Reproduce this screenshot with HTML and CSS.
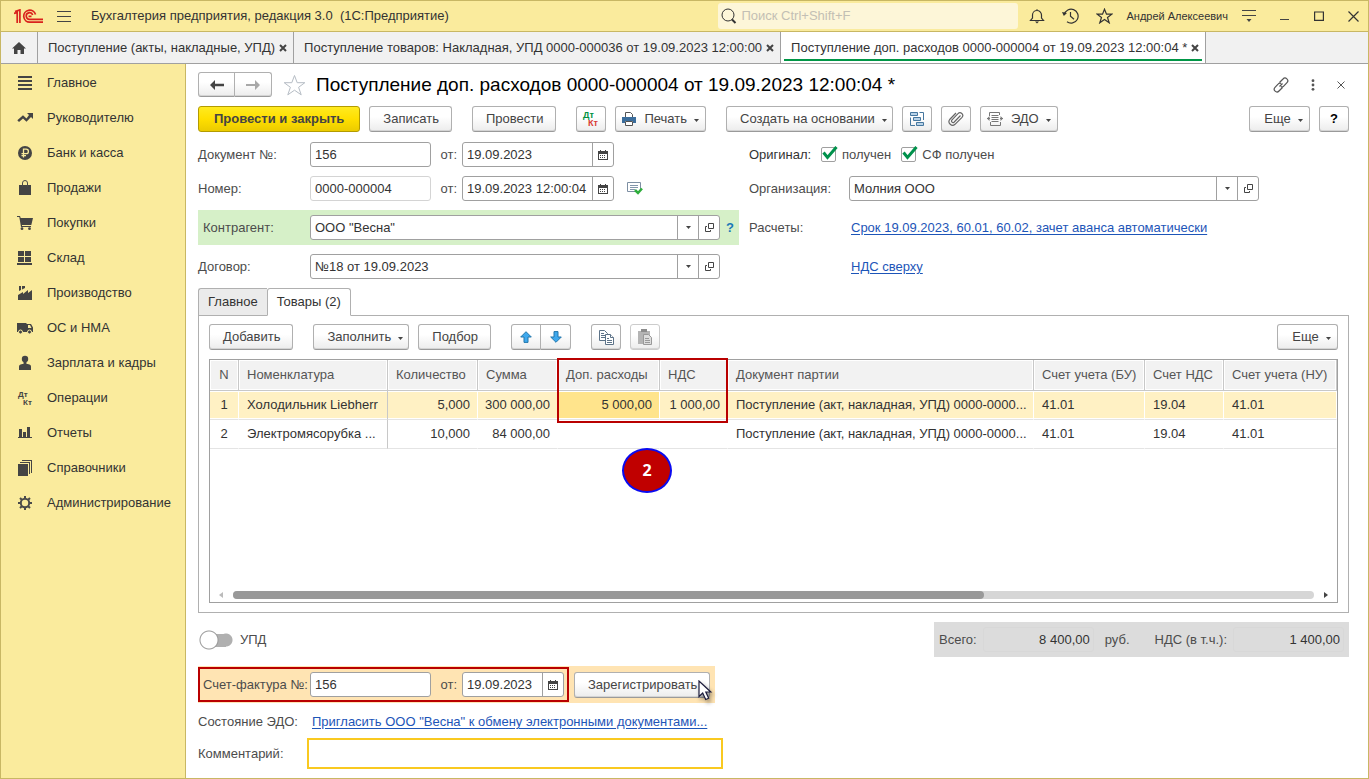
FILE: index.html
```
<!DOCTYPE html>
<html lang="ru">
<head>
<meta charset="utf-8">
<title>Бухгалтерия предприятия, редакция 3.0</title>
<link rel="stylesheet" href="styles.css">
</head>
<body>
<svg class="defs" aria-hidden="true">
  <symbol id="calendar" viewBox="0 0 10 10"><path d="M0 1h10v9H0z M1 4v5h8V4z" fill-rule="evenodd"/><path d="M2 0h1v2H2zM7 0h1v2H7zM2 5h1v1H2zM4 5h1v1H4zM6 5h1v1H6zM2 7h1v1H2zM4 7h1v1H4zM6 7h1v1H6z"/></symbol>
  <symbol id="caret" viewBox="0 0 5 3"><path d="M0 0h5L2.500 3z"/></symbol>
  <symbol id="open" viewBox="0 0 9 9"><path d="M3.500.5h5v5h-5zM2 3.500H.5v5h5V7" fill="none" stroke="#444"/></symbol>
  <symbol id="cross" viewBox="0 0 8 8"><path d="M1 1l6 6M7 1L1 7" fill="none" stroke="#444" stroke-width="2"/></symbol>
</svg>
<div class="window">
  <header class="titlebar">
    <svg class="logo" width="29" height="15" viewBox="0 0 29 15" fill="none" stroke="#d9221c" stroke-width="1.700"><path d="M0 4.500L3.200 3.500V14M1 2.500L5.900.9V14M21.500 5.500A6 6 0 1 0 16 13.200H29M18.700 6A3.300 3.300 0 1 0 16 10.300H29M14.500 7.300h3"/></svg>
    <button class="bare menu" aria-label="Меню"><svg width="14" height="11" viewBox="0 0 14 11"><path d="M0 0h14v1H0zM0 5h14v1H0zM0 10h14v1H0z"/></svg></button>
    <div class="app-name">Бухгалтерия предприятия, редакция 3.0&nbsp; (1С:Предприятие)</div>
    <label class="search"><svg width="16" height="17" viewBox="0 0 16 17" fill="none" stroke="#333"><circle cx="7" cy="7" r="6"/><path d="M11 11.500l3.500 3.500" stroke-width="2"/></svg><input type="text" placeholder="Поиск Ctrl+Shift+F" aria-label="Поиск"></label>
    <div class="win-tools">
      <button class="bare" aria-label="Уведомления"><svg width="16" height="16" viewBox="0 0 16 16" fill="none" stroke="#333"><path d="M8 1.200v1.300M1.500 12.500h13L12.500 10V7a4.500 4.500 0 0 0-9 0v3z" stroke-width="1.200"/><path d="M6 13.500h4L8 15.600z" fill="#333" stroke="none"/></svg></button>
      <button class="bare" aria-label="История"><svg width="17" height="16" viewBox="0 0 17 16" fill="none" stroke="#333"><path d="M2.300 6.500A7 7 0 1 1 5 13.800M8.500 4v4.300l3.500 3" stroke-width="1.200"/><path d="M0 4l1.800 4L5 5z" fill="#333" stroke="none"/></svg></button>
      <button class="bare" aria-label="Избранное"><svg width="17" height="16" viewBox="0 0 17 16" fill="none" stroke="#333" stroke-width="1.200"><path d="M8.500 1.200l2 5h5.300l-4.300 3.300 1.700 5.300-4.700-3.200-4.700 3.200 1.700-5.300L1.200 6.200h5.300z"/></svg></button>
      <span class="user">Андрей Алексеевич</span>
      <button class="bare" aria-label="Настройки"><svg width="14" height="12" viewBox="0 0 14 12"><path d="M0 0h14v1H0zM0 5h14v1H0zM4.500 9h5L7 12z"/></svg></button>
      <button class="bare" aria-label="Свернуть"><svg width="10" height="10" viewBox="0 0 10 10"><path d="M0 8h9v1H0z"/></svg></button>
      <button class="bare" aria-label="Развернуть"><svg width="10" height="10" viewBox="0 0 10 10" fill="none" stroke="#333" stroke-width="1.200"><path d="M.6 1h8.800v8.400H.6z"/></svg></button>
      <button class="bare" aria-label="Закрыть"><svg width="11" height="11" viewBox="0 0 11 11" fill="none" stroke="#333" stroke-width="1.200"><path d="M.5.5l10 10M10.500.5l-10 10"/></svg></button>
    </div>
  </header>

  <nav class="tabbar" aria-label="Открытые окна">
    <button class="win-tab home" aria-label="Начальная страница"><svg width="14" height="12" viewBox="0 0 14 12"><path d="M7 0l7 6.500h-2V12H8.500V8h-3v4H2V6.500H0z"/></svg></button>
    <button class="win-tab">Поступление (акты, накладные, УПД)<svg width="8" height="8"><use href="#cross"/></svg></button>
    <button class="win-tab">Поступление товаров: Накладная, УПД 0000-000036 от 19.09.2023 12:00:00<svg width="8" height="8"><use href="#cross"/></svg></button>
    <button class="win-tab current">Поступление доп. расходов 0000-000004 от 19.09.2023 12:00:04 *<svg width="8" height="8"><use href="#cross"/></svg></button>
  </nav>

  <div class="workspace">
    <nav class="sidebar" aria-label="Разделы">
      <a href="#"><svg width="16" height="16" viewBox="0 0 16 16"><path d="M1 1h14v2H1zM1 5h14v2H1zM1 9h14v2H1zM1 13h14v2H1z"/></svg>Главное</a>
      <a href="#"><svg width="16" height="16" viewBox="0 0 16 16"><path d="M10 3h6v6l-2-2-4.500 4.800L6 8.500 2 12 .3 10.300 6 5.200l3.500 3.300L12 5z"/></svg>Руководителю</a>
      <a href="#"><svg width="16" height="16" viewBox="0 0 16 16"><circle cx="8" cy="8" r="7"/><path d="M6.500 12.500V4.200h2.700a2.200 2.200 0 0 1 0 4.400H4.500M4.500 10.600h4.500" fill="none" stroke="#faeb9d" stroke-width="1.300"/></svg>Банк и касса</a>
      <a href="#"><svg width="16" height="16" viewBox="0 0 16 16"><path d="M2 5h3v2h1V5h4v2h1V5h3v10H2z"/><path d="M5.500 7V3a2.500 2.500 0 0 1 5 0v4" fill="none" stroke="#4a4a4a"/></svg>Продажи</a>
      <a href="#"><svg width="16" height="16" viewBox="0 0 16 16"><path d="M0 1h3l.7 2H16l-1.700 7H5v1h9v1H4L2.300 2H0z"/><circle cx="5" cy="13.700" r="1.400"/><circle cx="12.500" cy="13.700" r="1.400"/></svg>Покупки</a>
      <a href="#"><svg width="16" height="16" viewBox="0 0 16 16"><path d="M1 1h6v5H1zM8 1h6v5H8zM1 7h6v5H1zM8 7h6v5H8zM0 13h15v2H0z"/></svg>Склад</a>
      <a href="#"><svg width="16" height="16" viewBox="0 0 16 16"><path d="M1 15v-5l5-3v2l5-4v3l4-3v10zM2 1h2v4L2 6zM5 1h3v2L5 4.500z"/></svg>Производство</a>
      <a href="#"><svg width="16" height="16" viewBox="0 0 16 16"><path fill-rule="evenodd" d="M0 3h9.500v1H14l2 3.500V12H0zM11 5v3h3.500L13 5z"/><g stroke="#faeb9d"><circle cx="3.500" cy="12" r="2"/><circle cx="12.500" cy="12" r="2"/></g></svg>ОС и НМА</a>
      <a href="#"><svg width="16" height="16" viewBox="0 0 16 16"><circle cx="8" cy="4" r="3.200"/><path d="M6.500 6h3v3h-3zM2 15v-3.500C2 9.500 4 9 8 9s6 .5 6 2.500V15z"/></svg>Зарплата и кадры</a>
      <a href="#"><svg class="dtkt" width="16" height="16" viewBox="0 0 16 16"><text x="1" y="7">Дт</text><text x="6" y="15">Кт</text></svg>Операции</a>
      <a href="#"><svg width="16" height="16" viewBox="0 0 16 16"><path d="M2 4h3v8H2zM6 7h3v5H6zM10 2h3v10h-3zM1 12h14v1H1z"/></svg>Отчеты</a>
      <a href="#"><svg width="16" height="16" viewBox="0 0 16 16"><path d="M1 4h10v12H1zM3 2h10v12h-1V3H3zM5 0h10v13h-1V1H5z"/></svg>Справочники</a>
      <a href="#"><svg width="16" height="16" viewBox="0 0 16 16" fill="none" stroke="#4a4a4a"><circle cx="8" cy="8" r="4.200" stroke-width="2"/><path d="M8 1v2.500M8 12.500V15M1 8h2.500M12.500 8H15M3 3l1.800 1.800M11.200 11.200L13 13M3 13l1.800-1.800M11.200 4.800L13 3" stroke-width="2"/></svg>Администрирование</a>
    </nav>

    <main class="form">
      <div class="form-head">
        <div class="btn-pair">
          <button class="btn" aria-label="Назад"><svg width="14" height="10" viewBox="0 0 14 10"><path d="M0 5l5-5v3.800h9v2.400H5V10z"/></svg></button>
          <button class="btn forward" aria-label="Вперед"><svg width="14" height="10" viewBox="0 0 14 10"><path d="M14 5L9 0v4H0v2h9v4z"/></svg></button>
        </div>
        <button class="bare fav" aria-label="В избранное"><svg width="23" height="22" viewBox="0 0 23 22" fill="#fff" stroke="#b5bcc4"><path d="M11.500 1.500l2.700 7.200h7.600l-6.200 4.600 2.600 7.500-6.700-4.600-6.700 4.600 2.600-7.500L1.200 8.700h7.600z"/></svg></button>
        <h1>Поступление доп. расходов 0000-000004 от 19.09.2023 12:00:04 *</h1>
        <div class="head-tools">
          <button class="bare" aria-label="Ссылка"><svg width="16" height="16" viewBox="0 0 16 16" fill="none" stroke="#555" stroke-width="1.200"><path d="M6.500 5.500L10 2a2.600 2.600 0 0 1 4 3.700L10.700 9.200a2 2 0 0 1-2.700.3M9.500 10.500L6 14a2.600 2.600 0 0 1-4-3.700L5.300 6.800A2 2 0 0 1 8 6.500M6.500 9.500l3-3"/></svg></button>
          <button class="bare" aria-label="Еще"><svg width="4" height="12" viewBox="0 0 4 12" fill="#555"><circle cx="2" cy="1.700" r="1.400"/><circle cx="2" cy="6" r="1.400"/><circle cx="2" cy="10.300" r="1.400"/></svg></button>
          <button class="bare" aria-label="Закрыть форму"><svg width="8" height="8" viewBox="0 0 8 8" fill="none" stroke="#555"><path d="M.5.5l7 7M7.500.5l-7 7"/></svg></button>
        </div>
      </div>

      <div class="commands">
        <button class="btn primary">Провести и закрыть</button>
        <button class="btn">Записать</button>
        <button class="btn spaced">Провести</button>
        <button class="btn icon spaced" aria-label="Проводки"><svg class="dtkt color" width="18" height="16" viewBox="0 0 18 16"><text x="1" y="7">Дт</text><text x="6" y="15">Кт</text></svg></button>
        <button class="btn tight"><svg width="14" height="14" viewBox="0 0 14 14"><path d="M3.500 5V.5h5l2 2V5" fill="#fff" stroke="#555"/><path d="M0 5h14v6h-3V9H3v2H0z" fill="#3c6e9c"/><path d="M3.500 9.500h7v4h-7z" fill="#fff" stroke="#555"/></svg>Печать<svg class="car" width="5" height="3"><use href="#caret"/></svg></button>
        <button class="btn drop spaced">Создать на основании<svg class="car" width="5" height="3"><use href="#caret"/></svg></button>
        <button class="btn icon" aria-label="Связанные документы"><svg width="14" height="14" viewBox="0 0 14 14" fill="#b9d3e8" stroke="#46779f"><path d="M.5.500h7v3h-7zM3.500 5.500h7v3h-7zM6.500 10.500h7v3h-7z"/><path d="M9.500.5h4V8M.5 5.500v8H5" fill="none"/></svg></button>
        <button class="btn icon" aria-label="Присоединенные файлы"><svg width="16" height="16" viewBox="0 0 16 16" fill="none" stroke="#666" stroke-width="1.200"><path d="M12.500 4.500L6 11.200a1.500 1.500 0 0 1-2.200-2L10 2.700a2.600 2.600 0 0 1 4 3.600l-7 7A3.600 3.600 0 0 1 1.700 8.500L8 2"/></svg></button>
        <button class="btn tight"><svg width="16" height="14" viewBox="0 0 16 14" fill="none" stroke="#777"><path d="M2.500 4V.5h10V3M3.500 10v3.500h10V10M4.500 3.500h7M4.500 5.500h7M4.500 7.500h7M4.500 9.500h7M0 6.500h3M13 6.500h3"/><path d="M0 6.500L2.500 4v5zM16 6.500L13.500 4v5z" fill="#777" stroke="none"/></svg>ЭДО<svg class="car" width="5" height="3"><use href="#caret"/></svg></button>
        <button class="btn drop push">Еще<svg class="car" width="5" height="3"><use href="#caret"/></svg></button>
        <button class="btn icon help">?</button>
      </div>

      <div class="fields">
        <div class="row">
          <label class="lbl" for="docnum">Документ №:</label>
          <input class="box num" id="docnum" type="text" value="156">
          <label class="from" for="docdate">от:</label>
          <span class="box date"><input id="docdate" type="text" value="19.09.2023"><button aria-label="Календарь"><svg width="10" height="10"><use href="#calendar"/></svg></button></span>
        </div>
        <div class="row right">
          <span class="orig">Оригинал:</span>
          <label class="check"><input type="checkbox" checked><svg width="16" height="16" viewBox="0 0 16 16" fill="none"><path d="M1.500 6.500l4 5L14.500 1" stroke="#00914b" stroke-width="3"/></svg>получен</label>
          <label class="check"><input type="checkbox" checked><svg width="16" height="16" viewBox="0 0 16 16" fill="none"><path d="M1.500 6.500l4 5L14.500 1" stroke="#00914b" stroke-width="3"/></svg>СФ получен</label>
        </div>

        <div class="row">
          <label class="lbl" for="num">Номер:</label>
          <input class="box num pale" id="num" type="text" value="0000-000004">
          <label class="from" for="numdate">от:</label>
          <span class="box date"><input id="numdate" type="text" value="19.09.2023 12:00:04"><button aria-label="Календарь"><svg width="10" height="10"><use href="#calendar"/></svg></button></span>
          <svg class="posted" width="16" height="13" viewBox="0 0 16 13" fill="none"><path d="M9 9.500H.5v-9h13V7" fill="#fff" stroke="#7d8fa3"/><path d="M3 3.500h8M3 5.500h8M3 7.500h5" stroke="#8296ab"/><path d="M8 8l3 3 4-4.500" stroke="#2fae3c" stroke-width="2.500"/></svg>
        </div>
        <div class="row right">
          <label class="lbl" for="org">Организация:</label>
          <span class="box org"><input id="org" type="text" value="Молния ООО"><button aria-label="Выбрать"><svg width="5" height="3"><use href="#caret"/></svg></button><button aria-label="Открыть"><svg width="9" height="9"><use href="#open"/></svg></button></span>
        </div>

        <div class="row green">
          <label class="lbl" for="agent">Контрагент:</label>
          <span class="box ref"><input id="agent" type="text" value="ООО &quot;Весна&quot;"><button aria-label="Выбрать"><svg width="5" height="3"><use href="#caret"/></svg></button><button aria-label="Открыть"><svg width="9" height="9"><use href="#open"/></svg></button></span>
          <button class="bare hint">?</button>
        </div>
        <div class="row right">
          <span class="lbl">Расчеты:</span>
          <a class="link" href="#">Срок 19.09.2023, 60.01, 60.02, зачет аванса автоматически</a>
        </div>

        <div class="row">
          <label class="lbl" for="contract">Договор:</label>
          <span class="box ref"><input id="contract" type="text" value="№18 от 19.09.2023"><button aria-label="Выбрать"><svg width="5" height="3"><use href="#caret"/></svg></button><button aria-label="Открыть"><svg width="9" height="9"><use href="#open"/></svg></button></span>
        </div>
        <div class="row right">
          <span class="lbl"></span>
          <a class="link" href="#">НДС сверху</a>
        </div>
      </div>

      <div class="page-tabs" role="tablist">
        <button role="tab">Главное</button>
        <button role="tab" class="on" aria-selected="true">Товары (2)</button>
      </div>

      <section class="panel">
        <div class="commands">
          <button class="btn">Добавить</button>
          <button class="btn drop spaced">Заполнить<svg class="car" width="5" height="3"><use href="#caret"/></svg></button>
          <button class="btn">Подбор</button>
          <div class="btn-pair arrows spaced">
            <button class="btn" aria-label="Вверх"><svg width="12" height="12" viewBox="0 0 12 12"><path d="M6 .7L11.300 6H8v5.400H4V6H.7z" fill="#3fa9ee" stroke="#2277ac"/></svg></button>
            <button class="btn" aria-label="Вниз"><svg width="12" height="12" viewBox="0 0 12 12"><path d="M6 11.300L11.300 6H8V.6H4V6H.7z" fill="#3fa9ee" stroke="#2277ac"/></svg></button>
          </div>
          <button class="btn icon spaced" aria-label="Копировать"><svg width="15" height="15" viewBox="0 0 15 15" fill="#fff" stroke="#5d7388"><path d="M.5.500h5l3 3v7h-8z"/><path d="M2 3.500h3M2 5.500h4M2 7.500h4"/><path d="M6.500 4.500h5l3 3v7h-8z"/><path d="M11.500 4.500v3h3M8 8.500h2M8 10.500h5M8 12.500h5"/></svg></button>
          <button class="btn icon off" aria-label="Вставить"><svg width="15" height="16" viewBox="0 0 15 16"><path d="M0 2h12v13H0z" fill="#b4b4b4"/><path d="M3 0h6v3H3z" fill="#8c8c8c"/><path d="M5.500 5.500h5l3 3v7h-8z" fill="#ddd" stroke="#999"/><path d="M7 9.500h4M7 11.500h5M7 13.500h5" stroke="#999"/></svg></button>
          <button class="btn drop push">Еще<svg class="car" width="5" height="3"><use href="#caret"/></svg></button>
        </div>

        <div class="grid-box">
          <table>
            <colgroup><col class="c-n"><col class="c-item"><col class="c-qty"><col class="c-sum"><col class="c-extra"><col class="c-vat"><col><col class="c-bu"><col class="c-acc"><col class="c-nu"></colgroup>
            <thead>
              <tr><th>N</th><th class="fix">Номенклатура</th><th>Количество</th><th>Сумма</th><th class="marked">Доп. расходы<span class="frame"></span><span class="badge">2</span></th><th>НДС</th><th>Документ партии</th><th>Счет учета (БУ)</th><th>Счет НДС</th><th>Счет учета (НУ)</th></tr>
            </thead>
            <tbody>
              <tr class="sel"><td>1</td><td class="fix">Холодильник Liebherr</td><td class="r">5,000</td><td class="r">300 000,00</td><td class="r cell">5 000,00</td><td class="r">1 000,00</td><td>Поступление (акт, накладная, УПД) 0000-0000...</td><td>41.01</td><td>19.04</td><td>41.01</td></tr>
              <tr><td>2</td><td class="fix">Электромясорубка ...</td><td class="r">10,000</td><td class="r">84 000,00</td><td></td><td></td><td>Поступление (акт, накладная, УПД) 0000-0000...</td><td>41.01</td><td>19.04</td><td>41.01</td></tr>
            </tbody>
          </table>
          <div class="scroll">
            <svg width="4" height="6" viewBox="0 0 4 6"><path d="M4 0v6L0 3z" fill="#bbb"/></svg>
            <div class="track"><div class="thumb"></div></div>
            <svg width="4" height="6" viewBox="0 0 4 6"><path d="M0 0v6l4-3z"/></svg>
          </div>
        </div>
      </section>

      <div class="summary">
        <label class="switch"><input type="checkbox" role="switch">УПД</label>
        <div class="totals">
          <label for="total">Всего:</label><input id="total" type="text" value="8 400,00" readonly>
          <span class="cur">руб.</span>
          <label for="vat">НДС (в т.ч.):</label><input id="vat" type="text" value="1 400,00" readonly>
        </div>
      </div>

      <div class="invoice">
        <div class="red">
          <label class="lbl" for="inv">Счет-фактура №:</label>
          <input class="box num" id="inv" type="text" value="156">
          <label class="from" for="invdate">от:</label>
          <span class="box date short"><input id="invdate" type="text" value="19.09.2023"><button aria-label="Календарь"><svg width="10" height="10"><use href="#calendar"/></svg></button></span>
        </div>
        <button class="btn register">Зарегистрировать</button>
        <svg class="pointer" width="18" height="24" viewBox="0 0 18 24"><path d="M1 1v15.500l3.700-3.500 3 6.500 3-1.300-2.900-6.200h5z" fill="#fff" stroke="#1c1c3c" stroke-width="1.200"/></svg>
      </div>

      <div class="foot">
        <span class="lbl">Состояние ЭДО:</span><a class="link" href="#">Пригласить ООО "Весна" к обмену электронными документами...</a>
      </div>
      <div class="foot comment">
        <label class="lbl" for="comment">Комментарий:</label><input id="comment" type="text">
      </div>
    </main>
  </div>
</div>
</body>
</html>
```

FILE: styles.css
```
* { box-sizing: border-box; }
body { margin: 0; font: 13px/16px "Liberation Sans", Arial, sans-serif; color: #333; background: #fff; }
button, input { font: inherit; color: inherit; margin: 0; }
button { padding: 0; cursor: default; white-space: nowrap; }
svg { display: block; flex: none; }
svg:not([fill]) { fill: #444; }
.defs { position: absolute; width: 0; height: 0; }
.bare { border: 0; background: none; display: flex; align-items: center; justify-content: center; }

.window { min-height: 100vh; display: flex; flex-direction: column; border: 1px solid #c8b764; }

/* Title bar */
.titlebar { height: 31px; flex: none; display: flex; align-items: center; background: #faeb9d; border-bottom: 1px solid #c8b764; padding: 0 9px 0 13px; }
.menu { margin-left: 14px; }
.app-name { margin-left: 20px; flex: 1; white-space: nowrap; }
.search { width: 300px; height: 26px; display: flex; align-items: center; gap: 4px; padding-left: 3px; background: #fdf6d8; border-radius: 3px; }
.search input { flex: 1; min-width: 0; border: 0; outline: 0; padding: 0; background: none; }
.search input::placeholder { color: #c3bfb4; }
.win-tools { display: flex; align-items: center; margin-left: 11px; }
.win-tools .bare { margin-right: 17px; }
.user { font-size: 11px; margin: 0 14px 0 -4px; white-space: nowrap; }
.user ~ .bare { margin-right: 24px; }
.user ~ .bare:last-child { margin-right: 0; }

/* Open windows */
.tabbar { height: 32px; flex: none; display: flex; background: #f1f1f1; border-bottom: 1px solid #a0a0a0; }
.win-tab { display: flex; align-items: center; gap: 4px; border: 0; border-right: 1px solid #a0a0a0; background: none; padding: 0 6px 0 10px; }
.win-tab.home { width: 37px; padding: 0; justify-content: center; }
.win-tab.current { background: linear-gradient(#009646, #009646) center 27px / calc(100% - 6px) 2px no-repeat #fff; }

.workspace { flex: 1; display: flex; }
.sidebar { width: 185px; flex: none; background: #faeb9d; border-right: 1px solid #c8b764; padding-top: 1px; }
.sidebar a { display: flex; align-items: center; gap: 14px; height: 35px; padding-left: 16px; color: #333; text-decoration: none; }
.dtkt { font: bold 8px "Liberation Sans", Arial, sans-serif; overflow: visible; }
.dtkt.color { font-size: 9px; }
.dtkt.color text:first-child { fill: #00913f; }
.dtkt.color text:last-child { fill: #d83a34; }

/* Form */
.form { flex: 1; min-width: 0; display: flex; flex-direction: column; padding: 8px 19px 9px 12px; }
.form-head { display: flex; align-items: center; height: 25px; }
.form-head h1 { margin: 0 0 0 10px; font-size: 19px; line-height: 24px; font-weight: normal; color: #000; white-space: nowrap; }
.fav { margin-left: 11px; }
.head-tools { margin-left: auto; display: flex; align-items: center; gap: 22px; padding-right: 4px; }

.btn { height: 26px; display: flex; align-items: center; justify-content: center; border: 1px solid #b0b0b0; border-bottom-color: #9a9a9a; border-radius: 3px; background: linear-gradient(#fff 40%, #ececec); padding: 0 12px 0 13px; color: #444; box-shadow: inset 0 -1px #d4d4d4; }
.btn.primary { background: linear-gradient(#ffea20, #ffdf00 50%, #ebcb00); border-color: #b39b00; box-shadow: none; font-weight: bold; padding: 0 15px; }
.btn.icon { width: 30px; padding: 0; }
.btn.tight { padding: 0 6px; }
.btn.tight svg:first-child { margin-right: 8px; }
.btn.drop { padding-right: 5px; }
.btn.push { margin-left: auto; width: 61px; }
.btn.help { font-weight: bold; color: #000; }
.btn.off { border-color: #ccc; }
.car { margin: 2px 0 0 7px; }
.btn-pair { display: flex; }
.btn-pair .btn { width: 37px; height: 25px; padding: 0; border-radius: 3px 0 0 3px; }
.btn-pair .btn + .btn { border-left: 0; border-radius: 0 3px 3px 0; }
.btn-pair .forward svg { fill: #a8a8a8; }
.btn-pair.arrows .btn { width: 30px; height: 26px; }
.commands { display: flex; gap: 9px; margin-top: 9px; }
.spaced { margin-left: 11px; }

.fields { display: grid; grid-template-columns: 541px 1fr; gap: 9px 10px; margin: 10px 0 9px; }
.row { display: flex; align-items: center; }
.lbl { width: 112px; flex: none; color: #4c4c4c; white-space: nowrap; }
.right .lbl { width: 100px; }
.from { width: 31px; text-align: right; padding-right: 5px; color: #4c4c4c; }
.box { height: 25px; border: 1px solid #a0a0a0; border-radius: 3px; background: #fff; }
.box.num { width: 121px; padding: 0 4px; }
.box.pale { border-color: #d4d4d4; }
span.box { display: flex; }
span.box input { flex: 1; min-width: 0; border: 0; outline: 0; padding: 0 0 0 4px; background: none; }
span.box button { width: 21px; border: 0; border-left: 1px solid #a0a0a0; background: none; display: flex; align-items: center; justify-content: center; }
.date { width: 152px; }
.date.short { width: 102px; }
.ref { width: 410px; }
.org { width: 410px; }
.posted { margin-left: 13px; }
.green { background: #d6f0c8; height: 35px; padding-left: 5px; }
.green .lbl { width: 107px; }
.hint { color: #1a78b8; margin-left: 6px; font-weight: bold; }
.link { color: #1d55b8; text-decoration: underline; text-underline-offset: 2px; margin-left: 2px; white-space: nowrap; }
.orig { width: 72px; }
.check { display: flex; align-items: center; position: relative; color: #4c4c4c; margin-right: 10px; }
.check input { appearance: none; width: 15px; height: 15px; border: 1px solid #a0a0a0; border-radius: 2px; margin-right: 6px; background: #fff; }
.check svg { position: absolute; left: 1px; top: -1px; }

.page-tabs { display: flex; height: 28px; position: relative; margin-bottom: -1px; }
.page-tabs button { border: 1px solid #b0b0b0; border-right: 0; background: #ebebeb; padding: 0 9px; border-radius: 3px 0 0 0; }
.page-tabs .on { background: #fff; border-right: 1px solid #b0b0b0; border-bottom-color: #fff; border-radius: 3px 3px 0 0; }
.panel { flex: 1; display: flex; flex-direction: column; border: 1px solid #b0b0b0; padding: 0 10px 9px; }
.panel .commands { margin: 8px 0 9px; }
.grid-box { flex: 1; display: flex; flex-direction: column; border: 1px solid #a0a0a0; }

table { width: 100%; table-layout: fixed; border-collapse: separate; border-spacing: 0; }
th, td { padding: 0 2px 0 8px; text-align: left; font-weight: normal; white-space: nowrap; }
th { height: 31px; background: #f2f2f2; border-right: 1px solid #c8c8c8; border-bottom: 1px solid #c8c8c8; box-shadow: inset 0 0 0 1px #fff; color: #555; }
td { height: 29px; border-right: 1px solid #fff; border-bottom: 1px solid #e4e4e4; box-shadow: inset 0 1px #fff, inset 0 -1px #fff; }
td.fix { border-right-color: #c8c8c8; }
td:first-child, th:first-child { text-align: center; padding: 0 4px; }
.sel td { background: #fff1c4; }
.sel .cell { background: #ffe48c; }
td.r { text-align: right; padding: 0 7px 0 2px; }
.c-n { width: 29px; } .c-item { width: 149px; } .c-qty { width: 90px; } .c-sum { width: 80px; } .c-extra { width: 102px; }
.c-vat { width: 68px; } .c-bu { width: 111px; } .c-acc { width: 79px; } .c-nu { width: 113px; }
.marked { position: relative; }
.frame { position: absolute; left: -1px; top: -2px; width: 171px; height: 65px; border: 2px solid #b90000; }
.badge { position: absolute; left: 64px; top: 88px; width: 50px; height: 45px; border: 2px solid #0a0af0; border-radius: 50%; background: #c00000; color: #fff; font: bold 16px/41px "Open Sans", "Noto Sans", sans-serif; text-align: center; }

.scroll { margin-top: auto; display: flex; align-items: center; gap: 10px; padding: 0 9px 3px; }
.track { flex: 1; height: 8px; border-radius: 4px; background: #d6d6d6; }
.thumb { width: 69.5%; height: 8px; border-radius: 4px; background: #999; }

/* Bottom part */
.summary { display: flex; justify-content: space-between; align-items: center; margin-top: 9px; }
.switch { display: flex; align-items: center; gap: 6px; color: #4c4c4c; }
.switch input { appearance: none; width: 36px; height: 20px; background: radial-gradient(circle at 11px 10px, #fff 8px, #999 9px, transparent 10px), linear-gradient(#b0b0b0, #b0b0b0) 10px 4px / 18px 13px no-repeat, radial-gradient(circle at 28px 10px, #b0b0b0 6px, transparent 7px); }
.totals { display: flex; align-items: center; height: 35px; background: #dcdcdc; padding: 0 5px; color: #4c4c4c; white-space: nowrap; }
.totals input { width: 111px; height: 25px; border: 1px solid #d8d8d8; border-radius: 3px; background: none; padding: 0 3px; margin-left: 6px; text-align: right; color: #333; outline: 0; }
.cur { margin: 0 25px 0 11px; }

.invoice { align-self: flex-start; position: relative; display: flex; align-items: center; height: 37px; margin-top: 9px; padding-right: 5px; background: #ffe4b3; }
.red { height: 35px; display: flex; align-items: center; border: 2px solid #b90000; padding: 0 3px; }
.red .lbl { width: 107px; }
.register { margin-left: 5px; }
.pointer { position: absolute; right: -1px; top: 14px; filter: drop-shadow(2px 3px 2px #0006); }
.foot { display: flex; align-items: center; margin-top: 11px; }
.comment { margin-top: 8px; }
.comment .lbl { width: 109px; }
.comment input { width: 416px; height: 31px; border: 2px solid #f9c920; background: #fff; outline: 0; padding: 0 4px; }
```
